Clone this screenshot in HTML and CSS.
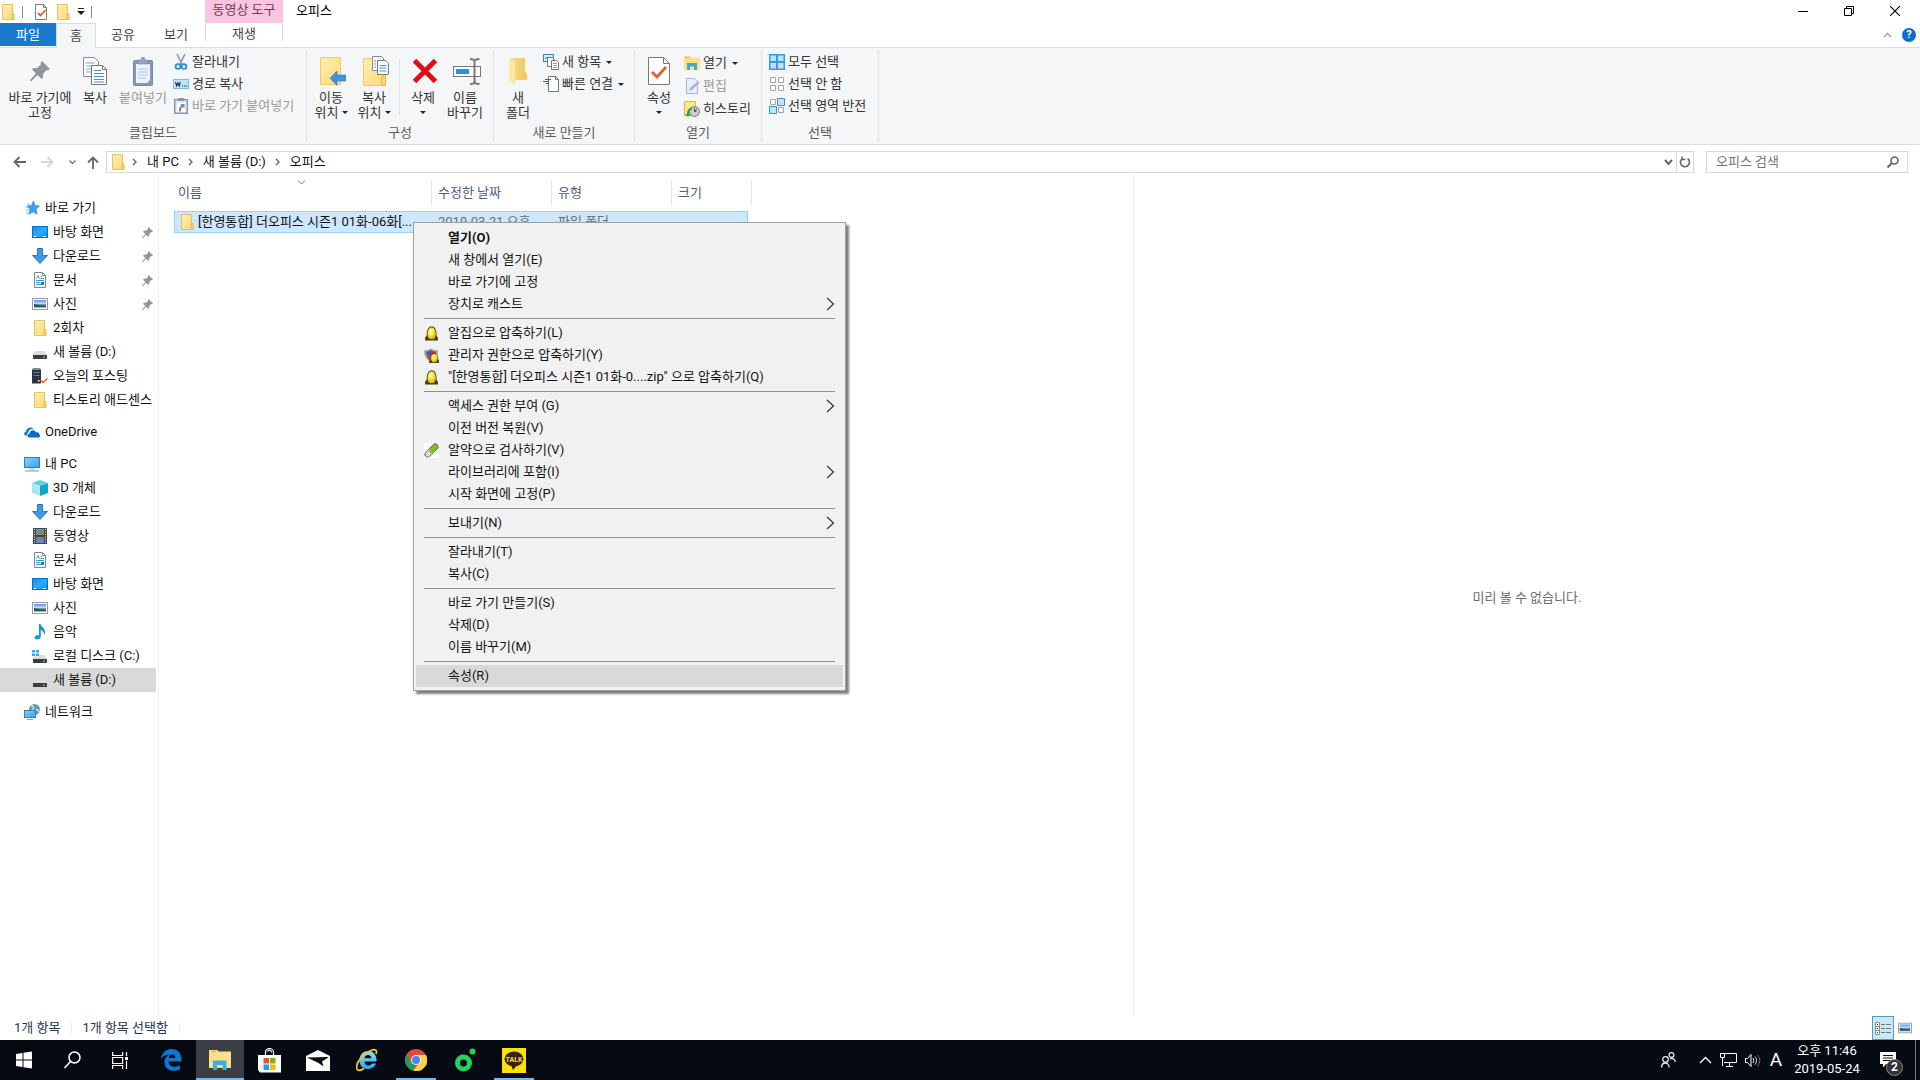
FILE: index.html
```html
<!DOCTYPE html>
<html lang="ko">
<head>
<meta charset="utf-8">
<title>오피스</title>
<link rel="stylesheet" href="styles.css">
</head>
<body>
<svg class="defs" aria-hidden="true">
  <defs>
    <linearGradient id="gFolder" x1="0" y1="0" x2="1" y2="1"><stop offset="0" stop-color="#ffeeae"/><stop offset="1" stop-color="#fbdb78"/></linearGradient>
    <linearGradient id="gBlue" x1="0" y1="0" x2="1" y2="1"><stop offset="0" stop-color="#8fd0ff"/><stop offset="1" stop-color="#2fa3f5"/></linearGradient>
    <linearGradient id="gDesk" x1="0" y1="0" x2="1" y2="1"><stop offset="0" stop-color="#0c93f5"/><stop offset=".5" stop-color="#2aa9ff"/><stop offset="1" stop-color="#0d92f2"/></linearGradient>
    <linearGradient id="gPhoto" x1="0" y1="0" x2="0" y2="1"><stop offset="0" stop-color="#4f94e8"/><stop offset=".5" stop-color="#cfe9f5"/><stop offset=".6" stop-color="#3d6a72"/><stop offset="1" stop-color="#8fc3ea"/></linearGradient>
    <linearGradient id="gNew" x1="0" y1="0" x2="1" y2="0"><stop offset="0" stop-color="#fbdf86"/><stop offset="1" stop-color="#f0c65a"/></linearGradient>
    <radialGradient id="gEgg" cx=".4" cy=".35" r=".7"><stop offset="0" stop-color="#fffbc0"/><stop offset=".5" stop-color="#f5e437"/><stop offset="1" stop-color="#c9a60c"/></radialGradient>
    <linearGradient id="gIe" x1="0" y1="0" x2="0" y2="1"><stop offset="0" stop-color="#8fe0ff"/><stop offset="1" stop-color="#2aa6ea"/></linearGradient>
  </defs>
  <symbol id="folder" viewBox="0 0 16 16"><path d="M2.500.5h10v11l1.500 1v3h-11.500z" fill="url(#gFolder)" stroke="#e5c264"/><path d="M12 15.500v-5l2-1v6z" fill="#ffe58f" stroke="#dfb752"/></symbol>
  <symbol id="checkdoc" viewBox="0 0 16 16"><path d="M2.500.5h8l3 3v12h-11z" fill="#fff" stroke="#7d7d7d"/><path d="M10.500.5v3h3" fill="none" stroke="#7d7d7d"/><path d="M5 9l2.500 2.500 5-5.500" fill="none" stroke="#dc6230" stroke-width="1.800"/></symbol>
  <symbol id="pin" viewBox="0 0 20 20"><path d="M12 0l8 8-2 1.500-1.500-.5-3.500 4 0 3.500-1.500 1.500-4-4-6 6-1.500.0 0-1 6-6.500-4-4 1.500-1.500 3.500 0 4-3.500-.5-1.500z" fill="#8d969d"/></symbol>
  <symbol id="copy" viewBox="0 0 24 28"><path d="M.5.5h11l4 4v15h-15z" fill="#fff" stroke="#8a8a8a"/><path d="M3 6h9M3 9h9M3 12h6M3 15h6" stroke="#6fa9dd"/><path d="M8.500 8.500h11l4 4v15h-15z" fill="#fff" stroke="#777"/><path d="M19.500 8.500v4h4" fill="none" stroke="#777"/><path d="M11 13.500h7M11 16.500h10M11 19.500h10M11 22.500h10M11 25h10" stroke="#3e94dc"/></symbol>
  <symbol id="paste" viewBox="0 0 20 29"><rect x=".5" y="3.500" width="19" height="25" rx="1" fill="#8498b8" stroke="#7588a8"/><path d="M3 7h14v16l-3 3H3z" fill="#eef3fb"/><path d="M5 12h10M5 15h10M5 18h10M5 21h8" stroke="#b3c4de"/><path d="M5 3h3l1-3h2l1 3h3v4H5z" fill="#95a6c2" stroke="#7588a8" stroke-width=".6"/></symbol>
  <symbol id="cut" viewBox="0 0 16 16"><path d="M4 0l5.500 11M12 0L6.500 11" stroke="#8d99a3" stroke-width="1.600"/><circle cx="5" cy="12.500" r="2.400" fill="none" stroke="#2b8fc9" stroke-width="1.800"/><circle cx="11" cy="12.500" r="2.400" fill="none" stroke="#2b8fc9" stroke-width="1.800"/></symbol>
  <symbol id="path" viewBox="0 0 16 16"><rect x=".5" y="3.500" width="15" height="9" fill="#bfe4fa" stroke="#7fb9dc"/><path d="M2.500 6l1.200 4 1.300-3 1.300 3 .9-4M9 10h1.200M11 10h1.200M13 10h1.200" fill="none" stroke="#1c2e40" stroke-width="1.100"/></symbol>
  <symbol id="pastelink" viewBox="0 0 16 16"><rect x="1.700" y="1.700" width="12.600" height="13.600" fill="#dfe7f4" stroke="#8798b5" stroke-width="1.500"/><rect x="5" y="0" width="6" height="3" fill="#8798b5"/><rect x="4" y="5" width="8" height="9" fill="#fff"/><path d="M7 6h4.500v4.500L10 9c-1.700 1-2.300 2.300-2 4.500H6C5.500 11 6.300 9 8.500 7.500z" fill="#7588a8"/></symbol>
  <symbol id="moveto" viewBox="0 0 26 29"><path d="M.5.5h20v27h-20z" fill="url(#gFolder)" stroke="#ecca72"/><path d="M17 14v4h9v6h-9v4.500l-7-7.300z" fill="#3a97df" stroke="#2c7dc0" stroke-width=".6"/></symbol>
  <symbol id="copyto" viewBox="0 0 26 30"><path d="M.5 2.500h20v27h-20z" fill="url(#gFolder)" stroke="#ecca72"/><path d="M18.500 29.500V21l4-1.500v10z" fill="#fbd565" stroke="#e3bc55"/><path d="M9.500.5h9l2 2v12h-11z" fill="#fff" stroke="#8a8a8a"/><path d="M14.500 4.500h8l3 3v11h-11z" fill="#fff" stroke="#777"/><path d="M11 5h2M11 8h2M11 11h2M16.500 9.500h7M16.500 12h7M16.500 15h7" stroke="#3e94dc"/></symbol>
  <symbol id="delete" viewBox="0 0 26 26"><path d="M2.500 2.500l21 21M23.500 2.500l-21 21" stroke="#dc0f1c" stroke-width="5"/></symbol>
  <symbol id="rename" viewBox="0 0 28 27"><rect x=".5" y="8.500" width="27" height="10" fill="#fff" stroke="#777"/><rect x="3" y="11" width="13" height="5" fill="#2f8fdc"/><path d="M17 1c3 0 4.500.5 4.500 2.500v20c0 2-1.500 2.500-4.500 2.500M26.500 1c-3 0-5 .5-5 2.500v20c0 2 2 2.500 5 2.500" fill="none" stroke="#777" stroke-width="2"/></symbol>
  <symbol id="newfolder" viewBox="0 0 20 28"><path d="M2 1h15v14l2 2v6H7z" fill="url(#gNew)"/><path d="M1 1l6 3v24l-6-4z" fill="#fde9a4"/></symbol>
  <symbol id="newitem" viewBox="0 0 16 16"><rect x=".5" y=".5" width="10" height="7" fill="#d5ecfa" stroke="#3d85b5"/><path d="M2 5l2-2 2 2h3" fill="none" stroke="#2f7bb0"/><path d="M4.500 3.500h6v9h-6z" fill="#fff" stroke="#777"/><path d="M8.500 6.500h5l2 2v7h-7z" fill="#fff" stroke="#777"/><path d="M10 9.500h4M10 11.500h4M10 13.500h4" stroke="#b98ba8"/></symbol>
  <symbol id="easy" viewBox="0 0 16 16"><path d="M5.500.5h7l3 3v12h-10z" fill="#fff" stroke="#777"/><path d="M12.500.5v3h3" fill="none" stroke="#777"/><path d="M2 3.500h6M0 5.500h6M3 7.500h3" stroke="#2067ad" stroke-width="1.200"/></symbol>
  <symbol id="props" viewBox="0 0 22 28"><path d="M.5.5h15l6 6v21h-21z" fill="#fff" stroke="#777"/><path d="M15.500.5v6h6" fill="none" stroke="#777"/><path d="M4 15l5 5 9-10" fill="none" stroke="#dc6230" stroke-width="2.800"/></symbol>
  <symbol id="explorer" viewBox="0 0 16 14"><path d="M0 0h6l1 1.500h9V14H0z" fill="#fde08a"/><path d="M1 1.500h4" stroke="#e0b84c"/><path d="M3 14V7h10v7h-3v-3.500H6V14z" fill="#3fa9d8"/></symbol>
  <symbol id="edit" viewBox="0 0 16 16"><path d="M2.500.5h8l3 3v12h-11z" fill="#e8eefa" stroke="#a5b5d5"/><path d="M5 13l1-3 8-7 1.500 1.500-7.500 7.500z" fill="#a3b4d3"/></symbol>
  <symbol id="history" viewBox="0 0 16 16"><path d="M.5.5h11v14H.5z" fill="#fde78f" stroke="#d9b94e"/><circle cx="10.500" cy="10.500" r="5" fill="#c8ced2" stroke="#6d767c"/><path d="M10.500 7v3.500l2 0M13 8l-2.500 2.500" fill="none" stroke="#555"/><path d="M3 13c0-4 2-6 5-7l0 2.500c-2 1-3 2.500-3 4.500l2 0-3 3-3-3z" fill="#36a84a"/></symbol>
  <symbol id="selall" viewBox="0 0 16 16"><path d="M0 0h16v16H0z" fill="#3b97de"/><path d="M1.500 1.500h5.500v5.500H1.500zM9 1.500h5.500v5.500H9zM1.500 9h5.500v5.500H1.500zM9 9h5.500v5.500H9z" fill="#c0e1fb"/></symbol>
  <symbol id="selnone" viewBox="0 0 16 16"><path d="M1.500 1.500h5v5h-5zM9.500 1.500h5v5h-5zM1.500 9.500h5v5h-5zM9.500 9.500h5v5h-5z" fill="#fff" stroke="#a3a3a3"/></symbol>
  <symbol id="selinv" viewBox="0 0 16 16"><path d="M1.500 1.500h5v5h-5zM9.500 9.500h5v5h-5z" fill="#fff" stroke="#a3a3a3"/><path d="M8.500.5h7v7h-7zM.5 8.500h7v7h-7z" fill="#c0e1fb" stroke="#3b90cc"/></symbol>
  <symbol id="star" viewBox="0 0 16 16"><path d="M9.500 1l1.600 4.500 4.400.5-3.300 3 .9 5.300-4-2.500-4.400 2.500 1.300-4.800L3 6l4.500-.5z" fill="#3fa3ea" stroke="#1d7fc8" stroke-width=".6"/><path d="M3 4h3M1 7h3M2 10h3M2 13h2" stroke="#7cc0f0"/></symbol>
  <symbol id="desktop" viewBox="0 0 16 16"><rect x=".5" y="2.500" width="15" height="11" fill="url(#gDesk)" stroke="#0a70bd"/><path d="M2 12.500h2M11 12.500h3" stroke="#fff"/></symbol>
  <symbol id="down" viewBox="0 0 16 16"><path d="M5.500.5h5v7h5L8 15.500.5 7.500h5z" fill="#3d9be6" stroke="#2479c4"/></symbol>
  <symbol id="docs" viewBox="0 0 16 16"><path d="M2.500.5h8l3 3v12h-11z" fill="#fff" stroke="#858585"/><path d="M10.500.5v3h3" fill="none" stroke="#858585"/><path d="M4.500 6.500l1.500-3 1.500 3M9 4.500h1M8.500 6.500h3.500M4 8.500h8M4 10.500h4M4 12.500h8" fill="none" stroke="#2a9fd0"/><rect x="9" y="10" width="3" height="2" fill="#1a6f98"/></symbol>
  <symbol id="photo" viewBox="0 0 16 16"><rect x=".5" y="2.500" width="15" height="11" fill="#fff" stroke="#999"/><rect x="2" y="4" width="12" height="8" fill="url(#gPhoto)"/><path d="M2 8l5 1 7 1v1H2z" fill="#2e5b60"/></symbol>
  <symbol id="drive" viewBox="0 0 16 16"><path d="M3 7h10l2 4H1z" fill="#dcdcdc"/><rect x="1" y="11" width="14" height="4" fill="#3e3e3e"/><rect x="11" y="12.500" width="2" height="1.200" fill="#4fe060"/></symbol>
  <symbol id="cdrive" viewBox="0 0 16 16"><path d="M0 2h3v2.500H0zM4 2h3v2.500H4zM0 5.500h3V8H0zM4 5.500h3V8H4z" fill="#1fb1e8"/><path d="M7 7h6l2 4H1l1-2.500h5z" fill="#dcdcdc"/><rect x="1" y="11" width="14" height="4" fill="#3e3e3e"/><rect x="11" y="12.500" width="2" height="1.200" fill="#4fe060"/></symbol>
  <symbol id="server" viewBox="0 0 16 16"><path d="M0 2l1-1.500h7L9 2v13.500H0z" fill="#2d3540"/><path d="M0 2l1-1.500h7L9 2z" fill="#7d858c"/><path d="M1.500 4.500h6M1.500 7.500h6" stroke="#3a8fd6" stroke-width="1.200"/><rect x="6" y="12" width="1.500" height="1.500" fill="#fff"/><path d="M8.500 12l2.500 2.500 4.500-4" fill="none" stroke="#e2602d" stroke-width="1.500"/></symbol>
  <symbol id="onedrive" viewBox="0 0 16 16"><path d="M1 11.500C-.5 10.500 0 8 2 7.700 2 4 7 2 9.500 5c-3-.5-5 1-5.300 3.500C3 9 2.800 10.500 3.500 11.500z" fill="#1277cf"/><path d="M5 13.500c-2-.5-2-3.800.5-4C5.500 6 10.500 4.800 12 8.300c2.500-.3 3.500.7 3.300 2.200 1.200.8.900 2.700-.5 3z" fill="#0a6cc5"/></symbol>
  <symbol id="pc" viewBox="0 0 16 16"><rect x=".5" y="1.500" width="15" height="10" fill="url(#gBlue)" stroke="#3a7ea8"/><path d="M5 13h6" stroke="#9fb6c5"/><path d="M1 15h14" stroke="#8aa5b7" stroke-width="1.200"/></symbol>
  <symbol id="cube" viewBox="0 0 16 16"><path d="M0 3l8 2.500V16l-8-3z" fill="#a9e6ee"/><path d="M8 5.500L16 3v10l-8 3z" fill="#11a5c9"/><path d="M0 3l8-3 8 3-8 2.500z" fill="#5fd0e2"/></symbol>
  <symbol id="film" viewBox="0 0 16 16"><rect x="1" y="0" width="14" height="16" fill="#4a4648"/><path d="M2.500 1v15M13.500 1v15" stroke="#e8e8e8" stroke-dasharray="1 1.500"/><rect x="4" y="1" width="8" height="6" fill="#5c8fd0"/><path d="M4 5h3l3-3 2 1v4H4z" fill="#8f8a3c"/><rect x="4" y="9" width="8" height="6" fill="#4f86d8"/><path d="M5 13l3-2 3 3H5z" fill="#b9824a"/></symbol>
  <symbol id="music" viewBox="0 0 16 16"><path d="M7 0h1.500c.5 3 5 4 4.500 9-.3 1-.8 1.500-1.200 2 .5-3-1.300-4.500-3-5v6.500c0 2-2 3-4 3-3 0-3-4 .3-4.200H7z" fill="#1793e0"/></symbol>
  <symbol id="network" viewBox="0 0 16 16"><circle cx="10.500" cy="5.500" r="5.500" fill="#5b9fb8"/><path d="M7 2c2-1 3 1 2 3s2 2 3 1 3 0 3 2" fill="none" stroke="#c3dfe3" stroke-width="1.500"/><rect x=".5" y="6.500" width="11" height="7" fill="url(#gBlue)" stroke="#3480b5"/><path d="M3 15.500h6" stroke="#8aa5b7"/></symbol>
  <symbol id="egg" viewBox="0 0 14 14"><path d="M1 13.500v-2.500l1.500-2C2.500 4 4 .3 7.200.3s4.600 3.700 4.600 8.700l1.200 2v2.500z" fill="#463e0c"/><path d="M7.200 1.200c2.700 0 3.900 3.800 3.900 7 0 2.800-1.500 4.200-3.900 4.200s-3.900-1.400-3.900-4.200c0-3.200 1.200-7 3.900-7z" fill="url(#gEgg)"/></symbol>
  <symbol id="shieldegg" viewBox="0 0 16 16"><path d="M0 2.500C3 2.500 5 1.500 7 .5c2 1 5 2 8 2 0 6-2 10-7.500 13C2 12.500 0 8.500 0 2.500z" fill="#a9a9a9"/><path d="M2 4c2 0 4-1 5.500-1.500V8H3z" fill="#2a5fc0"/><path d="M7.500 2.500C9 3.500 11 4 13 4l-1 4H7.500z" fill="#cf2f1f"/><path d="M3 8h4.500v5.500C5 12 4 11 3 8z" fill="#cc3322"/><path d="M5.500 16v-2l1.200-1.500C7 8 8.500 5.500 11 5.500s4 2.500 4.200 6.500l.8 1.500V16z" fill="#463e0c"/><ellipse cx="11" cy="10.800" rx="3.500" ry="4.500" fill="url(#gEgg)"/></symbol>
  <symbol id="pill" viewBox="0 0 14 14"><path d="M0 0h14v14H0z" fill="#fff"/><path d="M3.500 10.500l7-7" stroke="#5d6558" stroke-width="6" stroke-linecap="round"/><path d="M3.500 10.500L7 7" stroke="#dcdedb" stroke-width="4.400" stroke-linecap="round"/><path d="M7 7l3.500-3.500" stroke="#7cc31e" stroke-width="4.400" stroke-linecap="round"/></symbol>
  <symbol id="details" viewBox="0 0 16 13"><path d="M.5.5h4v12h-4zM.5 4.500h4M.5 8.500h4" fill="#fff" stroke="#8b8b8b"/><path d="M2 2.500h1M2 6.500h1M2 10.500h1" stroke="#222"/><path d="M6 2.500h4M11 2.500h5M6 6.500h4M11 6.500h5M6 10.500h4M11 10.500h5" stroke="#777"/></symbol>
  <symbol id="chev" viewBox="0 0 9 14"><path d="M1 1l6.500 6L1 13" fill="none" stroke="#333" stroke-width="1.200"/></symbol>
  <symbol id="crumb" viewBox="0 0 5 8"><path d="M1 1l3 3-3 3" fill="none" stroke="#666" stroke-width="1.400"/></symbol>
</svg>

<header class="titlebar">
  <div class="quick">
    <svg class="i16"><use href="#folder"/></svg><i class="tick"></i>
    <button class="plain" aria-label="속성"><svg class="i16"><use href="#checkdoc"/></svg></button>
    <button class="plain" aria-label="새 폴더"><svg class="i16"><use href="#folder"/></svg></button>
    <button class="plain" aria-label="사용자 지정"><svg width="8" height="7"><path d="M1 .5h6" stroke="#222"/><path d="M0 3h8L4 7z" fill="#222"/></svg></button><i class="tick"></i>
  </div>
  <div class="context-title">동영상 도구</div>
  <h1 class="title">오피스</h1>
  <div class="controls">
    <button class="plain" aria-label="최소화"><svg width="10" height="10"><path d="M0 5.500h10" stroke="#000"/></svg></button>
    <button class="plain" aria-label="이전 크기로 복원"><svg width="10" height="10"><path d="M.5 2.500h7v7h-7zM2.500 2V.5h7v7H8" fill="none" stroke="#000"/></svg></button>
    <button class="plain" aria-label="닫기"><svg width="10" height="10"><path d="M0 0l10 10M10 0L0 10" stroke="#000" stroke-width="1.100"/></svg></button>
  </div>
</header>

<nav class="tabs">
  <button class="tab file">파일</button>
  <button class="tab home">홈</button>
  <button class="tab share">공유</button>
  <button class="tab view">보기</button>
  <button class="tab play">재생</button>
  <div class="tabs-end">
    <button class="plain" aria-label="리본 축소"><svg width="9" height="6"><path d="M1 5l3.500-3.500L8 5" fill="none" stroke="#999" stroke-width="1.300"/></svg></button>
    <button class="help" aria-label="도움말">?</button>
  </div>
</nav>

<section class="ribbon">
  <div class="group g-clip">
    <div class="body">
      <button class="big w72"><span class="pic"><svg width="20" height="20"><use href="#pin"/></svg></span>바로 가기에<br>고정</button>
      <button class="big w38"><span class="pic"><svg width="24" height="28"><use href="#copy"/></svg></span>복사</button>
      <button class="big w58" disabled><span class="pic"><svg width="20" height="29"><use href="#paste"/></svg></span>붙여넣기</button>
      <div class="smalls">
        <button class="small"><svg class="i16"><use href="#cut"/></svg>잘라내기</button>
        <button class="small"><svg class="i16"><use href="#path"/></svg>경로 복사</button>
        <button class="small" disabled><svg class="i16"><use href="#pastelink"/></svg>바로 가기 붙여넣기</button>
      </div>
    </div>
    <div class="caption">클립보드</div>
  </div>
  <div class="group g-org">
    <div class="body">
      <button class="big w42"><span class="pic"><svg width="26" height="29"><use href="#moveto"/></svg></span>이동<br>위치 <i class="caret"></i></button>
      <button class="big w44"><span class="pic"><svg width="26" height="30"><use href="#copyto"/></svg></span>복사<br>위치 <i class="caret"></i></button>
      <i class="rule"></i>
      <button class="big w42"><span class="pic"><svg width="26" height="26"><use href="#delete"/></svg></span>삭제<br><i class="caret"></i></button>
      <button class="big w42"><span class="pic"><svg width="28" height="27"><use href="#rename"/></svg></span>이름<br>바꾸기</button>
    </div>
    <div class="caption">구성</div>
  </div>
  <div class="group g-new">
    <div class="body">
      <button class="big w40"><span class="pic"><svg width="20" height="28"><use href="#newfolder"/></svg></span>새<br>폴더</button>
      <div class="smalls inset">
        <button class="small"><svg class="i16"><use href="#newitem"/></svg>새 항목 <i class="caret"></i></button>
        <button class="small"><svg class="i16"><use href="#easy"/></svg>빠른 연결 <i class="caret"></i></button>
      </div>
    </div>
    <div class="caption">새로 만들기</div>
  </div>
  <div class="group g-open">
    <div class="body">
      <button class="big w40"><span class="pic"><svg width="22" height="28"><use href="#props"/></svg></span>속성<br><i class="caret"></i></button>
      <div class="smalls inset loose">
        <button class="small"><svg class="i16"><use href="#explorer"/></svg>열기 <i class="caret"></i></button>
        <button class="small" disabled><svg class="i16"><use href="#edit"/></svg>편집</button>
        <button class="small"><svg class="i16"><use href="#history"/></svg>히스토리</button>
      </div>
    </div>
    <div class="caption">열기</div>
  </div>
  <div class="group g-sel">
    <div class="body">
      <div class="smalls">
        <button class="small"><svg class="i16"><use href="#selall"/></svg>모두 선택</button>
        <button class="small"><svg class="i16"><use href="#selnone"/></svg>선택 안 함</button>
        <button class="small"><svg class="i16"><use href="#selinv"/></svg>선택 영역 반전</button>
      </div>
    </div>
    <div class="caption">선택</div>
  </div>
</section>

<div class="addressbar">
  <div class="history">
    <button class="plain" aria-label="뒤로"><svg width="13" height="12"><path d="M13 6H2M6.500 1L1.500 6l5 5" fill="none" stroke="#666" stroke-width="1.800"/></svg></button>
    <button class="plain" aria-label="앞으로"><svg width="13" height="12"><path d="M0 6h11M6.500 1l5 5-5 5" fill="none" stroke="#d5d5d5" stroke-width="1.800"/></svg></button>
    <button class="plain" aria-label="최근 위치"><svg width="7" height="5"><path d="M.5.5l3 3 3-3" fill="none" stroke="#777" stroke-width="1.400"/></svg></button>
    <button class="plain" aria-label="위로"><svg width="12" height="13"><path d="M6 13V2M1 6.500l5-5 5 5" fill="none" stroke="#666" stroke-width="1.800"/></svg></button>
  </div>
  <div class="address">
    <svg class="i16"><use href="#folder"/></svg>
    <svg class="crumb"><use href="#crumb"/></svg><a href="#pc">내 PC</a>
    <svg class="crumb"><use href="#crumb"/></svg><a href="#d">새 볼륨 (D:)</a>
    <svg class="crumb"><use href="#crumb"/></svg><a href="#office">오피스</a>
    <button class="plain drop" aria-label="이전 위치"><svg width="9" height="7"><path d="M1 1l3.500 4L8 1" fill="none" stroke="#666" stroke-width="2"/></svg></button>
    <button class="plain refresh" aria-label="새로 고침"><svg width="12" height="12"><path d="M8.500 2.500A4.500 4.500 0 1 1 3 2.800M3 .5v3h3.500" fill="none" stroke="#666" stroke-width="1.600"/></svg></button>
  </div>
  <label class="search"><input type="text" placeholder="오피스 검색" aria-label="오피스 검색"><svg width="12" height="12"><circle cx="7.500" cy="4.500" r="3.500" fill="none" stroke="#666" stroke-width="1.600"/><path d="M5 7L.5 11.500" stroke="#666" stroke-width="2"/></svg></label>
</div>

<main class="explorer">
  <nav class="tree">
    <ul>
      <li class="root"><svg class="i16"><use href="#star"/></svg>바로 가기</li>
      <li><svg class="i16"><use href="#desktop"/></svg>바탕 화면<svg class="pinned"><use href="#pin"/></svg></li>
      <li><svg class="i16"><use href="#down"/></svg>다운로드<svg class="pinned"><use href="#pin"/></svg></li>
      <li><svg class="i16"><use href="#docs"/></svg>문서<svg class="pinned"><use href="#pin"/></svg></li>
      <li><svg class="i16"><use href="#photo"/></svg>사진<svg class="pinned"><use href="#pin"/></svg></li>
      <li><svg class="i16"><use href="#folder"/></svg>2회차</li>
      <li><svg class="i16"><use href="#drive"/></svg>새 볼륨 (D:)</li>
      <li><svg class="i16"><use href="#server"/></svg>오늘의 포스팅</li>
      <li><svg class="i16"><use href="#folder"/></svg>티스토리 애드센스</li>
    </ul>
    <ul>
      <li class="root"><svg class="i16"><use href="#onedrive"/></svg>OneDrive</li>
    </ul>
    <ul>
      <li class="root"><svg class="i16"><use href="#pc"/></svg>내 PC</li>
      <li><svg class="i16"><use href="#cube"/></svg>3D 개체</li>
      <li><svg class="i16"><use href="#down"/></svg>다운로드</li>
      <li><svg class="i16"><use href="#film"/></svg>동영상</li>
      <li><svg class="i16"><use href="#docs"/></svg>문서</li>
      <li><svg class="i16"><use href="#desktop"/></svg>바탕 화면</li>
      <li><svg class="i16"><use href="#photo"/></svg>사진</li>
      <li><svg class="i16"><use href="#music"/></svg>음악</li>
      <li><svg class="i16"><use href="#cdrive"/></svg>로컬 디스크 (C:)</li>
      <li class="current"><svg class="i16"><use href="#drive"/></svg>새 볼륨 (D:)</li>
    </ul>
    <ul>
      <li class="root"><svg class="i16"><use href="#network"/></svg>네트워크</li>
    </ul>
  </nav>

  <section class="files">
    <table>
      <colgroup><col class="c-name"><col class="c-date"><col class="c-type"><col class="c-size"></colgroup>
      <thead><tr><th>이름<svg class="sort" width="9" height="5"><path d="M1 .5l3.500 3.500L8 .5" fill="none" stroke="#777"/></svg></th><th>수정한 날짜</th><th>유형</th><th>크기</th></tr></thead>
      <tbody><tr>
        <td><div class="cell first"><svg class="i16"><use href="#folder"/></svg>[한영통합] 더오피스 시즌1 01화-06화[...</div></td>
        <td><div class="cell">2019-03-21 오후</div></td>
        <td><div class="cell">파일 폴더</div></td>
        <td><div class="cell last"></div></td>
      </tr></tbody>
    </table>
    <div class="menu" role="menu">
      <button class="item default">열기(O)</button>
      <button class="item">새 창에서 열기(E)</button>
      <button class="item">바로 가기에 고정</button>
      <button class="item">장치로 캐스트<svg class="chev"><use href="#chev"/></svg></button>
      <hr>
      <button class="item"><svg class="mi"><use href="#egg"/></svg>알집으로 압축하기(L)</button>
      <button class="item"><svg class="mi"><use href="#shieldegg"/></svg>관리자 권한으로 압축하기(Y)</button>
      <button class="item"><svg class="mi"><use href="#egg"/></svg>"[한영통합] 더오피스 시즌1 01화-0....zip" 으로 압축하기(Q)</button>
      <hr>
      <button class="item">액세스 권한 부여 (G)<svg class="chev"><use href="#chev"/></svg></button>
      <button class="item">이전 버전 복원(V)</button>
      <button class="item"><svg class="mi"><use href="#pill"/></svg>알약으로 검사하기(V)</button>
      <button class="item">라이브러리에 포함(I)<svg class="chev"><use href="#chev"/></svg></button>
      <button class="item">시작 화면에 고정(P)</button>
      <hr>
      <button class="item">보내기(N)<svg class="chev"><use href="#chev"/></svg></button>
      <hr>
      <button class="item">잘라내기(T)</button>
      <button class="item">복사(C)</button>
      <hr>
      <button class="item">바로 가기 만들기(S)</button>
      <button class="item">삭제(D)</button>
      <button class="item">이름 바꾸기(M)</button>
      <hr>
      <button class="item hot">속성(R)</button>
    </div>
  </section>

  <aside class="preview">미리 볼 수 없습니다.</aside>
</main>

<footer class="status">
  <span>1개 항목</span><span>1개 항목 선택함</span>
  <div class="views">
    <button class="plain on" aria-label="자세히"><svg width="16" height="13"><use href="#details"/></svg></button>
    <button class="plain" aria-label="큰 아이콘"><svg width="14" height="14"><use href="#photo"/></svg></button>
  </div>
</footer>

<div class="taskbar">
  <div class="system">
    <button class="task" aria-label="시작"><svg width="16" height="18" viewBox="0 0 16 18"><path d="M0 3l6.500-1v6.500H0zM7.500 1.800L16 .5v8H7.500zM0 9.500h6.500V16L0 15zM7.500 9.500H16v8l-8.500-1.300z" fill="#fff"/></svg></button>
    <button class="task" aria-label="검색"><svg width="17" height="18" viewBox="0 0 17 18"><circle cx="10.500" cy="6.500" r="5.500" fill="none" stroke="#fff" stroke-width="1.500"/><path d="M6.500 10.500L.5 17" stroke="#fff" stroke-width="1.500"/></svg></button>
    <button class="task" aria-label="작업 보기"><svg width="16" height="17" viewBox="0 0 16 17"><path d="M.6 0v3.500h10V0M.6 17v-3.500h10V17M.6 5.500h10v6H.6zM14.500 0v4M14.500 9v8" fill="none" stroke="#fff" stroke-width="1.200"/><path d="M13 5h3v3h-3z" fill="#fff"/></svg></button>
  </div>
  <div class="apps">
    <button class="task" aria-label="Edge"><svg width="21" height="22" viewBox="0 0 21 22"><path d="M0 10C1 3.500 5 0 10.500 0 17 0 21 4.500 20.500 12.500H7.500c.3 5.500 7 6.500 11.500 3.800v4.200C11 24 3.500 20.500 3.500 13.500c0-4 1.700-6.300 5-8C4 5.800 1.500 7.500 0 10zM7.800 9h6.500c.2-4.800-5.800-5-6.500 0z" fill="#0a78d7"/></svg></button>
    <button class="task active running" aria-label="파일 탐색기"><svg width="22" height="20" viewBox="0 0 22 20"><path d="M0 0h8.500l1 1.500H22V18H0z" fill="#fbe08c"/><path d="M2 1.500h5" stroke="#dfa83a"/><path d="M4 20v-9.500h13.500V20h-4v-5H8v5z" fill="#42aede"/></svg></button>
    <button class="task" aria-label="Store"><svg width="23" height="25" viewBox="0 0 23 25"><path d="M0 7h23v17.500H2L0 22z" fill="#fff"/><path d="M7.500 8V4.500a4 4 0 0 1 8 0V8M9.500 3.500c1-2 4-2 4 1" fill="none" stroke="#fff" stroke-width="1.200"/><path d="M5.500 10h5.500v5.500H5.500z" fill="#e5512b"/><path d="M12 10h5.500v5.500H12z" fill="#7eb900"/><path d="M5.500 16.500h5.500V22H5.500z" fill="#17a4ee"/><path d="M12 16.500h5.500V22H12z" fill="#fdb902"/></svg></button>
    <button class="task" aria-label="메일"><svg width="24" height="21" viewBox="0 0 24 21"><path d="M0 6L12 0l12 6v15H0z" fill="#fff"/><path d="M1 7.500l22-.5-7 4.500 1.500 5L12.500 13z" fill="#090d14"/></svg></button>
    <button class="task" aria-label="Internet Explorer"><svg width="22" height="24" viewBox="0 0 22 24"><path d="M12 3c6 0 9 5 8.500 10.500H8.500c0 4.500 5.500 5 7.500 2h4c-1.500 4-5 5.500-8.500 5.500-5.500 0-8-4-8-9S7 3 12 3zM8.500 10.300h7c-.5-4.300-6.500-4.300-7 0z" fill="url(#gIe)"/><path d="M20 6c1.500-4-1-5.500-5-3.500C8 5-1 15 1 21c1 2.500 5 1 7-.5" fill="none" stroke="#f4c42d" stroke-width="1.800"/></svg></button>
    <button class="task running chrome" aria-label="Chrome"><svg width="22" height="22" viewBox="0 0 22 22"><circle cx="11" cy="11" r="11" fill="#dd4b3d"/><path d="M1.500 5.500L7 15l4 1-2.800 5.700A11 11 0 0 1 1.500 5.500z" fill="#1e9d58"/><path d="M11 6h10a11 11 0 0 1-12.800 15.700L14 14z" fill="#fdd04a"/><circle cx="11" cy="11" r="5" fill="#f4f4f4"/><circle cx="11" cy="11" r="4" fill="#4684ee"/></svg></button>
    <button class="task" aria-label="브라우저"><svg width="21" height="24" viewBox="0 0 21 24"><circle cx="8.500" cy="15" r="6" fill="none" stroke="#1fd463" stroke-width="5"/><circle cx="17.500" cy="3.500" r="3" fill="#1fd463"/></svg></button>
    <button class="task running talk" aria-label="카카오톡"><svg width="24" height="25" viewBox="0 0 24 25"><path d="M0 0h24v25H0z" fill="#fbe300"/><ellipse cx="12" cy="11" rx="9.500" ry="7.500" fill="#3b1e1e"/><path d="M9 17h6l-4 5z" fill="#3b1e1e"/><text x="12" y="14" text-anchor="middle" class="talk-text">TALK</text></svg></button>
  </div>
  <div class="tray">
    <button class="plain people" aria-label="피플"><svg width="15" height="16" viewBox="0 0 15 16" fill="none" stroke="#e8e8e8" stroke-width="1.300"><circle cx="4.500" cy="7.500" r="2.800"/><path d="M.6 15.500c0-6 7.500-6 7.500 0"/><circle cx="10.500" cy="3" r="2.400"/><path d="M9 7c2.500-1.500 5 0 5.300 3"/></svg></button>
    <button class="plain" aria-label="숨겨진 아이콘"><svg width="13" height="8"><path d="M1 7l5.500-5.500L12 7" fill="none" stroke="#fff" stroke-width="1.400"/></svg></button>
    <button class="plain" aria-label="네트워크"><svg width="17" height="14" viewBox="0 0 17 14" fill="none" stroke="#fff"><path d="M5 .5h11.500v9H4M.5.5h4v4h-4zM2.500 5v8M9.500 10v3M6 13.500h7"/></svg></button>
    <button class="plain" aria-label="볼륨"><svg width="16" height="13" viewBox="0 0 16 13" fill="none" stroke="#fff"><path d="M.5 4.500h2l3.500-4v12l-3.500-4h-2zM8 4c1 1.500 1 3.500 0 5M10 2.500c2 2.500 2 5.500 0 8"/><path d="M12.500 1c3 3.500 3 7.500 0 11" stroke="#777"/></svg></button>
    <button class="plain ime">A</button>
    <button class="plain clock">오후 11:46<br>2019-05-24</button>
    <button class="plain notice" aria-label="알림"><svg width="16" height="16" viewBox="0 0 16 16"><path d="M0 0h16v12H6l-3 3.500V12H0z" fill="#fff"/><path d="M3 3.500h10M3 6h10M3 8.500h7" stroke="#090d14"/></svg><span class="count">2</span></button>
  </div>
</div>
</body>
</html>
```
FILE: styles.css
```css
* { box-sizing: border-box; }

body {
  margin: 0;
  height: 100vh;
  display: flex;
  flex-direction: column;
  overflow: hidden;
  background: #fff;
  color: #111;
  font: 13px/22px Roboto, "Noto Sans CJK KR", sans-serif;
  white-space: nowrap;
}

button {
  margin: 0;
  padding: 0;
  border: 0;
  background: none;
  color: inherit;
  font: inherit;
}

svg { flex: none; }
.defs { position: absolute; width: 0; height: 0; }
.i16 { width: 16px; height: 16px; }
.plain { display: flex; align-items: center; justify-content: center; }

/* Title bar */
.titlebar { display: flex; flex: none; height: 23px; }
.quick { width: 205px; display: flex; align-items: center; gap: 6px; }
.quick .tick { margin-right: 4px; }
.tick { width: 1px; height: 12px; background: #888; }
.context-title {
  width: 78px;
  background: #fcc5df;
  color: #6b3f55;
  text-align: center;
  line-height: 20px;
}
.title { margin: 0 0 0 13px; font-size: 13px; font-weight: 400; color: #000; }
.controls { margin-left: auto; display: flex; height: 21px; padding-right: 2px; }
.controls .plain { width: 46px; }

/* Tabs */
.tabs { display: flex; flex: none; height: 24px; color: #444; }
.tab { height: 23px; }
.file { width: 56px; background: #1979ca; color: #fff; }
.home {
  width: 40px;
  height: 25px;
  position: relative;
  border: 1px solid #dadbdc;
  border-bottom: 0;
  background: #f5f6f7;
}
.share { width: 54px; }
.view { width: 52px; margin-right: 3px; }
.play { width: 78px; height: 18px; border: solid #dcdcdc; border-width: 0 1px; line-height: 22px; }
.tabs-end { margin-left: auto; display: flex; align-items: center; gap: 10px; padding-right: 4px; }
.help {
  width: 14px;
  height: 14px;
  border-radius: 50%;
  background: #0b6fc7;
  color: #fff;
  font-size: 11px;
  font-weight: 700;
  line-height: 14px;
}

/* Ribbon */
.ribbon {
  flex: none;
  display: flex;
  padding: 2px 0;
  border: solid #dadbdc;
  border-width: 1px 0;
  background: #f5f6f7;
  color: #333;
}
.group { border-right: 1px solid #e1e2e3; }
.g-clip { width: 307px; }
.g-org { width: 187px; }
.g-new { width: 141px; }
.g-open { width: 127px; }
.g-sel { width: 117px; }
.body { display: flex; height: 74px; padding: 1px 4px 0; }
.g-org .body { padding-left: 3px; }
.g-sel .body { padding-left: 6px; }
.caption { line-height: 18px; text-align: center; color: #5a5a5a; }
.big {
  display: block;
  padding-top: 4px;
  line-height: 15px;
  text-align: center;
  align-self: flex-start;
}
.pic { display: flex; align-items: center; justify-content: center; height: 32px; margin-bottom: 3px; }
.g-org .pic { padding-left: 4px; }
.w38 { width: 38px; }
.w40 { width: 40px; }
.w42 { width: 42px; }
.w44 { width: 44px; }
.w58 { width: 58px; }
.w72 { width: 72px; }
.rule { width: 1px; height: 56px; margin: 8px 2px 0 3px; background: #e1e2e3; }
.smalls { display: flex; flex-direction: column; padding-left: 1px; }
.smalls.inset { padding-left: 5px; }
.smalls.loose { gap: 1px; padding-top: 1px; }
.small { display: flex; align-items: center; gap: 3px; height: 22px; }
button:disabled { color: #9a9a9a; }
.caret {
  display: inline-block;
  vertical-align: 3px;
  border: solid transparent;
  border-width: 3px 3px 0;
  border-top-color: #222;
}
.small .caret { margin-left: 2px; }

/* Address bar */
.addressbar { flex: none; display: flex; gap: 12px; padding: 6px 12px 0 13px; }
.history { display: flex; width: 93px; margin-right: -12px; align-items: center; gap: 15px; }
.history .plain:nth-child(3) { margin-right: -4px; }
.address {
  flex: 1;
  display: flex;
  align-items: center;
  height: 22px;
  padding-left: 3px;
  border: 1px solid #d9d9d9;
}
.address a { color: #111; text-decoration: none; }
.address .i16 { margin-right: -3px; }
.crumb { width: 5px; height: 8px; margin: 0 10px 0 9px; }
.drop { width: 16px; margin-left: auto; }
.refresh { width: 17px; height: 20px; border-left: 1px solid #d9d9d9; }
.search { display: flex; align-items: center; width: 202px; height: 22px; padding: 0 8px 0 9px; border: 1px solid #d9d9d9; }
.search input { flex: 1; min-width: 0; padding: 0; border: 0; outline: 0; background: none; font: inherit; }
.search input::placeholder { color: #767676; opacity: 1; }

/* Navigation tree */
.explorer { flex: 1; min-height: 0; display: flex; }
.tree { width: 159px; padding-top: 23px; border-right: 1px solid #f0f0f0; }
.tree ul { margin: 0 0 8px; padding: 0; list-style: none; }
.tree li {
  display: flex;
  align-items: center;
  gap: 5px;
  width: 156px;
  height: 24px;
  padding: 0 3px 0 32px;
}
.tree .root { padding-left: 24px; }
.tree .current { background: #d9d9d9; }
.pinned { width: 11px; height: 11px; margin-left: auto; }

/* File list */
.files { position: relative; flex: 1; padding: 7px 0 0 15px; border-right: 1px solid #f0f0f0; }
table { table-layout: fixed; width: 578px; border-collapse: separate; border-spacing: 0; }
.c-name { width: 258px; }
.c-date, .c-type { width: 120px; }
.c-size { width: 80px; }
th {
  position: relative;
  height: 25px;
  padding: 0 0 0 6px;
  border-right: 1px solid #e5e5e5;
  color: #4c607a;
  font-weight: 400;
  text-align: left;
}
th:first-child { padding-left: 4px; }
.sort { position: absolute; left: 123px; top: 0; }
td { padding: 6px 0 0; }
.cell {
  height: 22px;
  padding-left: 6px;
  border: solid #99d1ff;
  border-width: 1px 0;
  background: #cce8ff;
  color: #6d6d6d;
  line-height: 20px;
}
.first { display: flex; align-items: center; gap: 3px; padding-left: 4px; border-left-width: 1px; color: #111; overflow: hidden; }
.last { margin-right: 4px; border-right-width: 1px; }

/* Context menu */
.menu {
  position: absolute;
  left: 254px;
  top: 49px;
  width: 433px;
  padding: 4px 2px 3px;
  border: 1px solid #a0a0a0;
  background: #f1f1f1;
  box-shadow: 3px 3px 2px rgba(0, 0, 0, .5);
}
.item {
  display: flex;
  align-items: center;
  position: relative;
  width: 100%;
  height: 22px;
  padding: 0 8px 0 32px;
}
.default { font-weight: 700; }
.hot { background: #d9d9d9; }
.menu hr { height: 1px; margin: 3px 8px; border: 0; background: #919191; }
.mi { width: 15px; height: 15px; margin: 0 9px 0 -24px; }
.chev { width: 9px; height: 14px; margin-left: auto; }

.preview { flex: none; width: 786px; padding-top: 6px; display: flex; align-items: center; justify-content: center; color: #6d6d6d; }

/* Status bar */
.status { flex: none; display: flex; height: 24px; padding: 0 4px 0 14px; color: #26374f; }
.status span { height: 12px; margin: 6px 10px 0 0; padding-right: 11px; border-right: 1px solid #ececec; line-height: 12px; }
.views { margin-left: auto; display: flex; }
.views .plain { width: 22px; }
.views .on { border: 1px solid #4aa0c4; background: #cbe8f6; }

/* Taskbar */
.taskbar { flex: none; display: flex; height: 40px; background: #060b13; color: #fff; }
.system { display: flex; margin-right: 3px; }
.apps { display: flex; gap: 1px; }
.task { width: 48px; height: 40px; display: flex; align-items: center; justify-content: center; border: solid transparent; border-width: 2px 0; }
.running { border-bottom-color: #76b9ed; }
.active { background: #3b3f45; border-top-color: #3b3f45; }
.chrome, .talk { width: 40px; margin: 0 4px; }
.talk-text { fill: #fbe300; font: 700 7px Roboto, sans-serif; }
.tray { margin-left: auto; margin-right: 4px; display: flex; align-items: center; gap: 8px; border-right: 1px solid #777; }
.people { margin-right: 15px; }
.ime { width: 14px; margin-right: 2px; font-size: 19px; }
.clock { width: 68px; line-height: 18px; }
.notice { position: relative; width: 54px; height: 40px; margin-left: -8px; }
.count {
  position: absolute;
  left: 25px;
  top: 19px;
  width: 17px;
  height: 17px;
  border: 1px solid #888;
  border-radius: 50%;
  background: #333;
  font-size: 12px;
  font-weight: 700;
  line-height: 15px;
}
```
